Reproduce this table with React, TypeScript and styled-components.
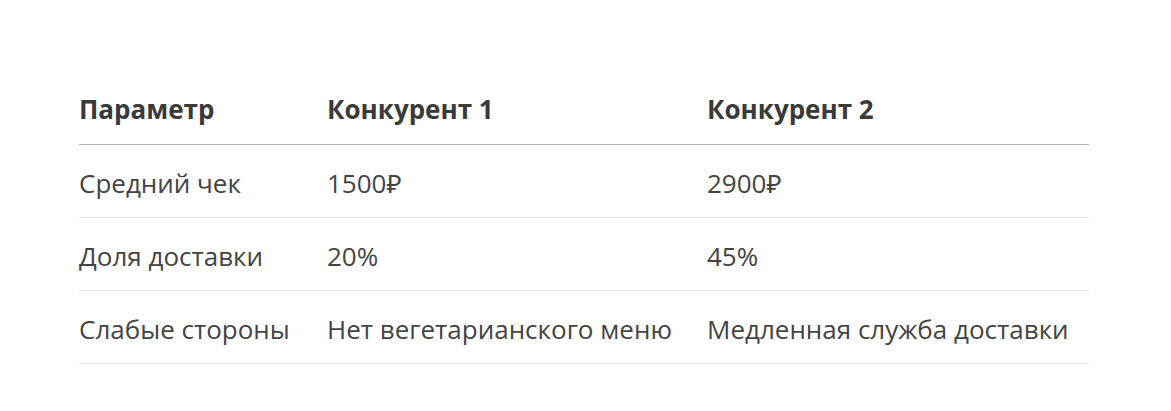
import React from "react";
import styled, { createGlobalStyle } from "styled-components";

const Global = createGlobalStyle`
  html, body { margin: 0; padding: 0; background: #fff; }
  body { font-family: "Open Sans", "Noto Sans", sans-serif; }
`;

const Page = styled.div`
  padding: 72px 82px 0 79px;
`;

const Table = styled.div`
  display: grid;
  grid-template-columns: 248px 380px 1fr;
  width: 1010px;
`;

const Cell = styled.div<{ $head?: boolean }>`
  box-sizing: border-box;
  height: 73px;
  display: flex;
  align-items: center;
  padding-top: ${(p) => (p.$head ? 2 : 4)}px;
  font-size: 26px;
  line-height: 1;
  color: ${(p) => (p.$head ? "#3a3a3a" : "#444")};
  font-weight: ${(p) => (p.$head ? 700 : 400)};
  border-bottom: 1px solid ${(p) => (p.$head ? "#b4b4b4" : "#e3e3e3")};
  white-space: nowrap;
`;

const head = ["Параметр", "Конкурент 1", "Конкурент 2"];
const rows = [
  ["Средний чек", "1500₽", "2900₽"],
  ["Доля доставки", "20%", "45%"],
  ["Слабые стороны", "Нет вегетарианского меню", "Медленная служба доставки"],
];

export default function App() {
  return (
    <>
      <Global />
      <Page>
        <Table>
          {head.map((h) => (
            <Cell key={h} $head>
              {h}
            </Cell>
          ))}
          {rows.map((r) =>
            r.map((c, i) => <Cell key={c + i}>{c}</Cell>)
          )}
        </Table>
      </Page>
    </>
  );
}
